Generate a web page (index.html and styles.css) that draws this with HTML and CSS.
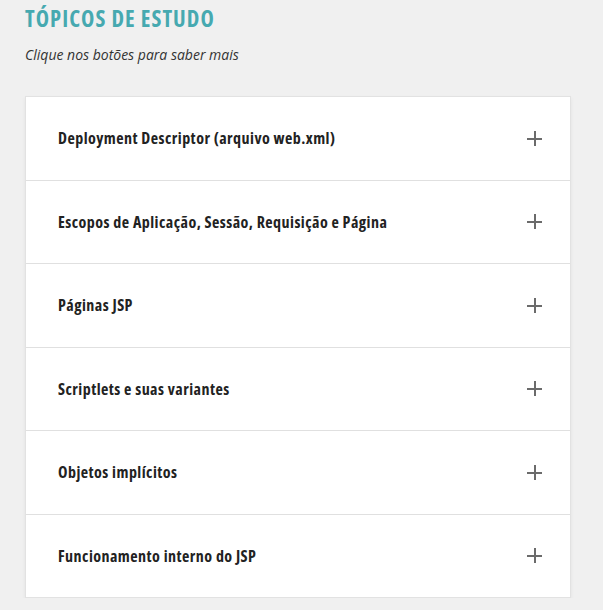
FILE: index.html
```html
<!DOCTYPE html>
<html lang="pt">
<head>
<meta charset="utf-8">
<link rel="stylesheet" href="styles.css">
</head>
<body>
<main class="page">
  <h1 class="title">TÓPICOS DE ESTUDO</h1>
  <p class="subtitle">Clique nos botões para saber mais</p>
  <section class="accordion">
    <div class="item"><span class="label">Deployment Descriptor (arquivo web.xml)</span><span class="plus"></span></div>
    <div class="item"><span class="label">Escopos de Aplicação, Sessão, Requisição e Página</span><span class="plus"></span></div>
    <div class="item"><span class="label">Páginas JSP</span><span class="plus"></span></div>
    <div class="item"><span class="label">Scriptlets e suas variantes</span><span class="plus"></span></div>
    <div class="item"><span class="label">Objetos implícitos</span><span class="plus"></span></div>
    <div class="item"><span class="label">Funcionamento interno do JSP</span><span class="plus"></span></div>
  </section>
</main>
</body>
</html>
```
FILE: styles.css
```css
html, body { margin: 0; padding: 0; background: #f0f0f0; }
body { font-family: "Open Sans", "Liberation Sans", sans-serif; }
.page { padding: 6px 32px 0 25px; }
.title {
  margin: 0;
  font-size: 22.5px;
  line-height: 26px;
  font-weight: 700;
  font-stretch: 75%;
  color: #46a9b0;
  letter-spacing: 1.05px;
}
.subtitle {
  margin: 13px 0 0 0;
  font-size: 14px;
  line-height: 19px;
  font-style: italic;
  color: #333;
}
.accordion {
  margin-top: 32px;
  width: 546px;
  background: #fff;
  border: 1px solid #e2e2e2;
  box-sizing: border-box;
  box-shadow: 0 2px 4px rgba(0,0,0,0.06);
}
.item {
  display: flex;
  align-items: center;
  justify-content: space-between;
  height: 83.5px;
  box-sizing: border-box;
  padding: 0 28px 0 32px;
  border-top: 1px solid #e0e0e0;
}
.item:first-child { border-top: none; height: 82.5px; }
.label {
  font-size: 16px;
  font-weight: 700;
  font-stretch: 75%;
  letter-spacing: 0.46px;
  color: #222;
}
.plus {
  position: relative;
  width: 15px;
  height: 15px;
}
.plus::before, .plus::after {
  content: "";
  position: absolute;
  background: #6b6b6b;
}
.plus::before { left: 0; right: 0; top: 7px; height: 2px; }
.plus::after { top: 0; bottom: 0; left: 7px; width: 2px; }
```
